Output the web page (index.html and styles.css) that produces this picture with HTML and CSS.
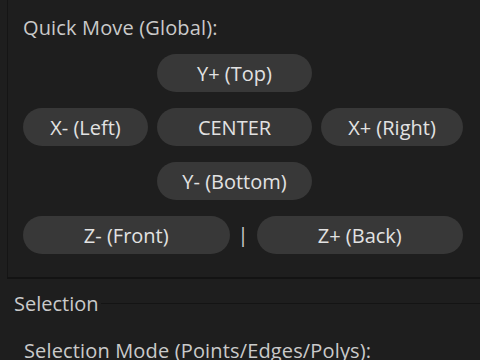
FILE: index.html
```html
<!DOCTYPE html>
<html>
<head>
<meta charset="utf-8">
<link rel="stylesheet" href="styles.css">
</head>
<body>
<div class="panel">
  <div class="label">Quick Move (Global):</div>
  <div class="grid">
    <div class="btn c2">Y+ (Top)</div>
    <div class="btn c1">X- (Left)</div>
    <div class="btn c2">CENTER</div>
    <div class="btn c3">X+ (Right)</div>
    <div class="btn c2">Y- (Bottom)</div>
  </div>
  <div class="zrow">
    <div class="btn grow">Z- (Front)</div>
    <div class="sep">|</div>
    <div class="btn grow">Z+ (Back)</div>
  </div>
</div>
<div class="group">
  <div class="group-title"><span class="title">Selection</span><span class="line"></span></div>
  <div class="label sub">Selection Mode (Points/Edges/Polys):</div>
</div>
</body>
</html>
```

FILE: styles.css
```css
html, body {
  margin: 0;
  padding: 0;
}
body {
  width: 480px;
  height: 360px;
  overflow: hidden;
  background: #1e1e1e;
  font-family: "Open Sans", "Noto Sans", sans-serif;
  font-size: 20px;
  color: #cacaca;
}
.panel {
  margin-left: 7px;
  border-left: 1px solid #151515;
  border-bottom: 2px solid #131313;
  height: 279px;
  box-sizing: border-box;
  padding: 14px 0 0 15px;
}
.label {
  line-height: 27px;
  height: 27px;
  letter-spacing: 0.15px;
  white-space: nowrap;
}
.grid {
  margin-top: 13px;
  display: grid;
  grid-template-columns: 125px 155px 142px;
  grid-auto-rows: 38px;
  column-gap: 9px;
  row-gap: 16px;
}
.btn {
  background: #383838;
  color: #e2e2e2;
  border-radius: 19px;
  height: 38px;
  display: flex;
  align-items: center;
  justify-content: center;
  white-space: nowrap;
}
.c1 { grid-column: 1; }
.c2 { grid-column: 2; }
.c3 { grid-column: 3; }
.zrow {
  margin-top: 16px;
  width: 440px;
  display: flex;
  align-items: center;
  gap: 8px;
}
.grow { flex: 1; }
.sep {
  color: #d0d0d0;
  line-height: 38px;
}
.group {
  padding-top: 11px;
}
.group-title {
  display: flex;
  align-items: center;
  height: 27px;
  line-height: 27px;
  padding-left: 14px;
}
.title {
  padding-right: 2px;
}
.line {
  flex: 1;
  height: 1px;
  background: #141414;
}
.sub {
  margin-top: 20px;
  padding-left: 24px;
}
```
